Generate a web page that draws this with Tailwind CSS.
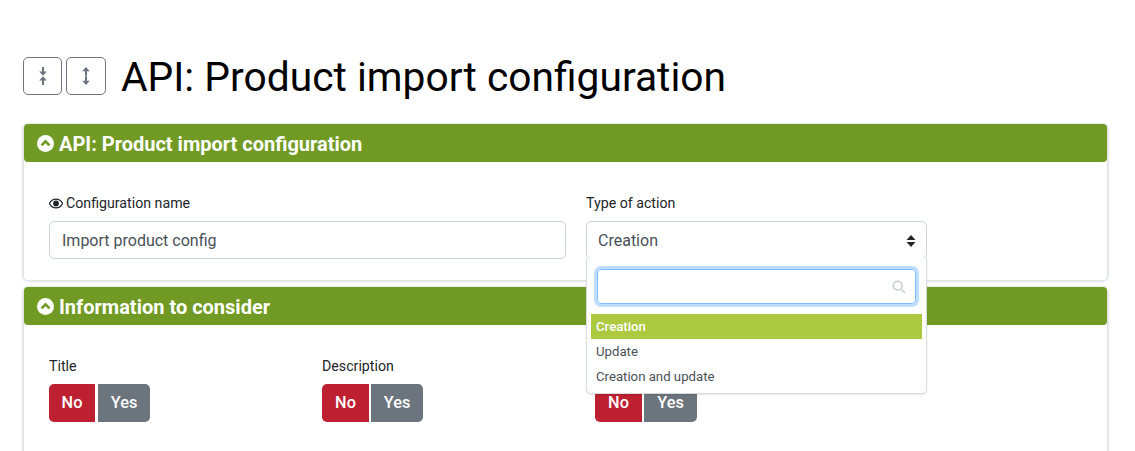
<!DOCTYPE html>
<html lang="en">
<head>
    <meta charset="UTF-8">
    <title>API: Product import configuration</title>
    <script src="https://cdn.jsdelivr.net/npm/@tailwindcss/browser@4"></script>
</head>
<body class="h-[451px] overflow-hidden bg-white font-['Roboto',sans-serif] text-[#212529]">
    <div class="pl-[23px] pr-[27px] pt-[57px]">
        <!-- Page title -->
        <div class="flex items-center h-[38px] mb-[29px]">
            <button class="w-[39px] h-[38px] border border-[#6c757d] rounded-[5px] flex items-center justify-center text-[#6c757d]">
                <svg viewBox="0 0 8 18" class="w-[8px] h-[18px]" fill="currentColor"><path d="M3 0h2v4.500h2.800L4 8.700.2 4.500H3zM4 9.300l3.800 4.200H5V18H3v-4.500H.2z"/></svg>
            </button>
            <button class="ml-[4px] w-[40px] h-[38px] border border-[#6c757d] rounded-[5px] flex items-center justify-center text-[#6c757d]">
                <svg viewBox="0 0 8 18" class="w-[8px] h-[18px]" fill="currentColor"><path d="M4 0l3.800 4.200H5v4.500H3V4.200H.2zM3 9.300h2v4.500h2.800L4 18 .2 13.800H3z"/></svg>
            </button>
            <h1 class="ml-[15px] pt-[2px] text-[40.75px] leading-[48px] font-normal text-black">API: Product import configuration</h1>
        </div>

        <!-- Card 1 -->
        <section class="border-x border-b border-[#dee2e6] rounded-[5px] shadow-[0_0_3px_rgba(0,0,0,0.2)] h-[157px] relative mb-[6px]">
            <div class="h-[38px] bg-[#709a23] rounded-[4px] flex items-center pt-[2px] pl-[13px] text-white text-[20px] font-bold">
                <svg viewBox="0 0 18 18" class="w-[17px] h-[17px] mr-[5px] -mt-[2px]"><circle cx="9" cy="9" r="9" fill="#fff"/><path d="M4.800 11l4.200-4.200 4.200 4.200" fill="none" stroke="#709a23" stroke-width="2.800"/></svg>
                API: Product import configuration
            </div>
            <div class="flex pl-[25px] pt-[32px]">
                <div class="w-[517px]">
                    <label class="flex items-center text-[14.2px] leading-[18px] mb-[9px]">
                        <svg viewBox="0 0 16 12" class="w-[14px] h-[11px] mr-[3px]"><path d="M8 1C4.500 1 1.800 3.200.5 6c1.300 2.800 4 5 7.500 5s6.200-2.200 7.500-5C14.200 3.200 11.500 1 8 1z" fill="none" stroke="#212529" stroke-width="1.300"/><circle cx="8" cy="6" r="3.300" fill="#212529"/></svg>
                        Configuration name
                    </label>
                    <input value="Import product config" class="w-full h-[38px] border border-[#ced4da] rounded-[5px] px-[12px] text-[16px] text-[#495057]">
                </div>
                <div class="ml-[20px] w-[341px] relative">
                    <label class="block text-[14.2px] leading-[18px] mb-[9px]">Type of action</label>
                    <div class="h-[38px] border border-[#ced4da] rounded-[5px] pl-[11px] pr-[10px] pt-[1px] flex items-center justify-between text-[16px] text-[#495057]">
                        Creation
                        <svg viewBox="0 0 10 14" class="w-[10px] h-[14px]" fill="#212529"><path d="M5 1l4.500 5H.5zM5 13L.5 8h9z"/></svg>
                    </div>
                    <!-- Open dropdown -->
                    <div class="absolute z-10 left-0 top-[64px] w-[341px] h-[136px] bg-white border border-[#d8dcdf] border-t-0 rounded-b-[5px] shadow-[0_1px_2px_rgba(0,0,0,0.1)] px-[4px]">
                        <div class="relative mx-[6px] mt-[11px] mb-[10px]">
                            <input class="block w-full h-[35px] rounded-[4px] border border-[#80bdff] shadow-[0_0_0_3px_rgba(0,123,255,0.25)]">
                            <svg viewBox="0 0 16 16" class="absolute right-[10px] top-[11px] w-[14px] h-[14px]" fill="none" stroke="#c8ccd0" stroke-width="1.600"><circle cx="6.500" cy="6.500" r="5"/><path d="M10.200 10.200L15 15"/></svg>
                        </div>
                        <ul class="text-[13.2px] text-[#495057]">
                            <li class="h-[25px] leading-[25px] px-[5px] bg-[#adc940] text-white font-medium">Creation</li>
                            <li class="h-[25px] leading-[25px] px-[5px]">Update</li>
                            <li class="h-[25px] leading-[25px] px-[5px]">Creation and update</li>
                        </ul>
                    </div>
                </div>
            </div>
        </section>

        <!-- Card 2 -->
        <section class="border-x border-[#dee2e6] rounded-[5px] shadow-[0_0_3px_rgba(0,0,0,0.2)] h-[300px]">
            <div class="h-[38px] bg-[#709a23] rounded-[4px] flex items-center pt-[2px] pl-[13px] text-white text-[20px] font-bold">
                <svg viewBox="0 0 18 18" class="w-[17px] h-[17px] mr-[5px] -mt-[2px]"><circle cx="9" cy="9" r="9" fill="#fff"/><path d="M4.800 11l4.200-4.200 4.200 4.200" fill="none" stroke="#709a23" stroke-width="2.800"/></svg>
                Information to consider
            </div>
            <div class="grid grid-cols-[273px_273px_273px] pl-[25px] pt-[32px] text-[14.2px]">
                <div>
                    <label class="block leading-[18px] mb-[9px]">Title</label>
                    <div class="flex gap-[3px] text-[16.300px] font-medium text-white">
                        <span class="w-[46px] h-[38px] flex items-center justify-center bg-[#bd2031] rounded-l-[5px]">No</span>
                        <span class="w-[52px] h-[38px] flex items-center justify-center bg-[#6c757d] rounded-r-[5px]">Yes</span>
                    </div>
                </div>
                <div>
                    <label class="block leading-[18px] mb-[9px]">Description</label>
                    <div class="flex gap-[2px] text-[16.300px] font-medium text-white">
                        <span class="w-[47px] h-[38px] flex items-center justify-center bg-[#bd2031] rounded-l-[5px]">No</span>
                        <span class="w-[52px] h-[38px] flex items-center justify-center bg-[#6c757d] rounded-r-[5px]">Yes</span>
                    </div>
                </div>
                <div>
                    <div class="h-[18px] mb-[9px]"></div>
                    <div class="flex gap-[2px] text-[16.300px] font-medium text-white">
                        <span class="w-[47px] h-[38px] flex items-center justify-center bg-[#bd2031] rounded-l-[5px]">No</span>
                        <span class="w-[53px] h-[38px] flex items-center justify-center bg-[#6c757d] rounded-r-[5px]">Yes</span>
                    </div>
                </div>
            </div>
        </section>
    </div>
</body>
</html>
